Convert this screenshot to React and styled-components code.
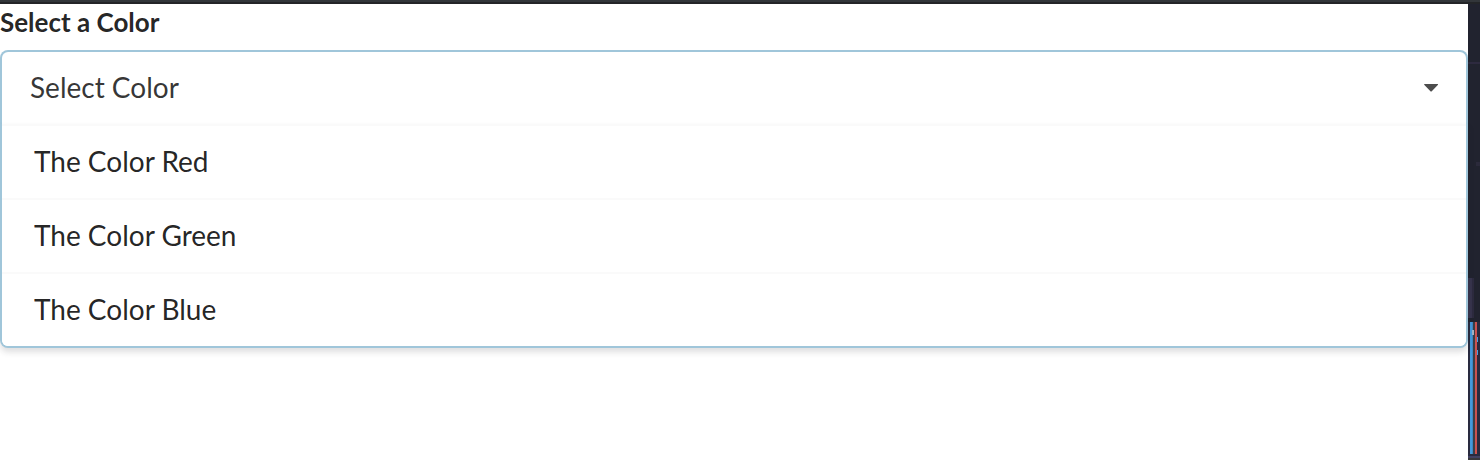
import { useState } from "react";
import styled, { createGlobalStyle } from "styled-components";

const GlobalStyle = createGlobalStyle`
  *, *::before, *::after { box-sizing: border-box; }
  body {
    margin: 0;
    background: #fff;
    font-family: Lato, "Liberation Sans", sans-serif;
    color: rgba(0, 0, 0, 0.87);
  }
`;

const Page = styled.div`
  display: flex;
  flex-direction: column;
  min-height: 100vh;
`;

const TopEdge = styled.div`
  height: 4px;
  background: #32363a;
  border-bottom: 2px solid #232528;
`;

const Body = styled.div`
  display: flex;
  flex: 1;
`;

const Content = styled.main`
  flex: 1;
  min-width: 0;
`;

const Label = styled.label`
  display: block;
  margin-bottom: 10px;
  font-size: 26px;
  font-weight: 700;
  line-height: 36px;
`;

const Dropdown = styled.div`
  position: relative;
`;

const Trigger = styled.div`
  display: flex;
  align-items: center;
  height: 74px;
  padding-right: 27px;
  background: #fff;
  border: 2px solid #a0c6da;
  border-bottom: ${({ $open }) => ($open ? "0" : "2px solid #a0c6da")};
  border-radius: ${({ $open }) => ($open ? "8px 8px 0 0" : "8px")};
`;

const Select = styled.select`
  flex: 1;
  min-width: 0;
  height: 100%;
  padding: 0 28px 2px;
  border: 0;
  outline: 0;
  appearance: none;
  background: transparent;
  color: rgba(0, 0, 0, 0.8);
  font: inherit;
  font-size: 28px;
  cursor: pointer;
`;

const Caret = styled.svg`
  display: block;
  width: 16px;
  height: 10px;
  fill: #4d4d4d;
  pointer-events: none;
`;

const Menu = styled.ul`
  position: absolute;
  top: 100%;
  left: 0;
  right: 0;
  margin: 0;
  padding: 0;
  list-style: none;
  overflow: hidden;
  background: #fff;
  border: 2px solid #a0c6da;
  border-top: 0;
  border-radius: 0 0 8px 8px;
  box-shadow: 0 4px 6px rgba(34, 36, 38, 0.15);
`;

const Option = styled.button`
  display: block;
  width: 100%;
  height: 74px;
  padding: 0 32px 2px;
  border: 0;
  border-top: 2px solid #fafafa;
  background: #fff;
  color: rgba(0, 0, 0, 0.87);
  font: inherit;
  font-size: 28px;
  text-align: left;
  cursor: pointer;

  &:hover { background: #f7f7f7; }
`;

const Rail = styled.aside`
  display: flex;
  width: 12px;
  background: #21232f;
`;

const RailDrawing = styled.svg`
  display: block;
  width: 12px;
  height: 456px;
`;

const colors = [
  { label: "The Color Red", value: "red" },
  { label: "The Color Green", value: "green" },
  { label: "The Color Blue", value: "blue" },
];

export default function App() {
  const [open, setOpen] = useState(true);
  const [value, setValue] = useState("");

  const choose = (next) => {
    setValue(next);
    setOpen(false);
  };

  return (
    <Page>
      <GlobalStyle />
      <TopEdge />
      <Body>
        <Content>
          <Label htmlFor="color">Select a Color</Label>
          <Dropdown>
            <Trigger $open={open}>
              <Select
                id="color"
                value={value}
                onChange={(e) => choose(e.target.value)}
                onMouseDown={(e) => {
                  e.preventDefault();
                  setOpen(!open);
                }}
              >
                <option value="">Select Color</option>
                {colors.map((c) => (
                  <option key={c.value} value={c.value}>{c.label}</option>
                ))}
              </Select>
              <Caret viewBox="0 0 16 10" aria-hidden="true">
                <path d="M1.4 1H14.8Q15.4 1.4 14.8 2L9 8Q8.1 9 7.2 8L1.4 2Q.8 1.4 1.4 1Z" />
              </Caret>
            </Trigger>
            {open && (
              <Menu>
                {colors.map((c) => (
                  <li key={c.value}>
                    <Option type="button" onClick={() => choose(c.value)}>{c.label}</Option>
                  </li>
                ))}
              </Menu>
            )}
          </Dropdown>
        </Content>
        <Rail>
          <RailDrawing viewBox="0 0 12 456" shapeRendering="crispEdges" aria-hidden="true">
            <rect y="58" width="12" height="2" fill="#2d2a3f" />
            <rect x="8" y="158" width="4" height="4" fill="#2b2a3b" />
            <rect y="274" width="4" height="40" fill="#37344d" />
            <rect x="4" y="274" width="2" height="40" fill="#2d2b3f" />
            <rect y="318" width="12" height="138" fill="#292a3f" />
            <rect x="2" y="318" width="2" height="132" fill="#4599dc" />
            <rect x="4" y="318" width="1" height="132" fill="#3c87c4" />
            <rect x="5" y="318" width="2" height="132" fill="#3b4048" />
            <rect x="7" y="318" width="2" height="132" fill="#cc5250" />
            <rect x="4" y="326" width="2" height="5" fill="#a3b4c4" />
            <rect x="9" y="333" width="1" height="5" fill="#4a9fe3" />
            <rect x="9" y="346" width="1" height="5" fill="#4a9fe3" />
            <rect y="452" width="12" height="2" fill="#414163" />
            <rect y="454" width="12" height="2" fill="#38383c" />
          </RailDrawing>
        </Rail>
      </Body>
    </Page>
  );
}
